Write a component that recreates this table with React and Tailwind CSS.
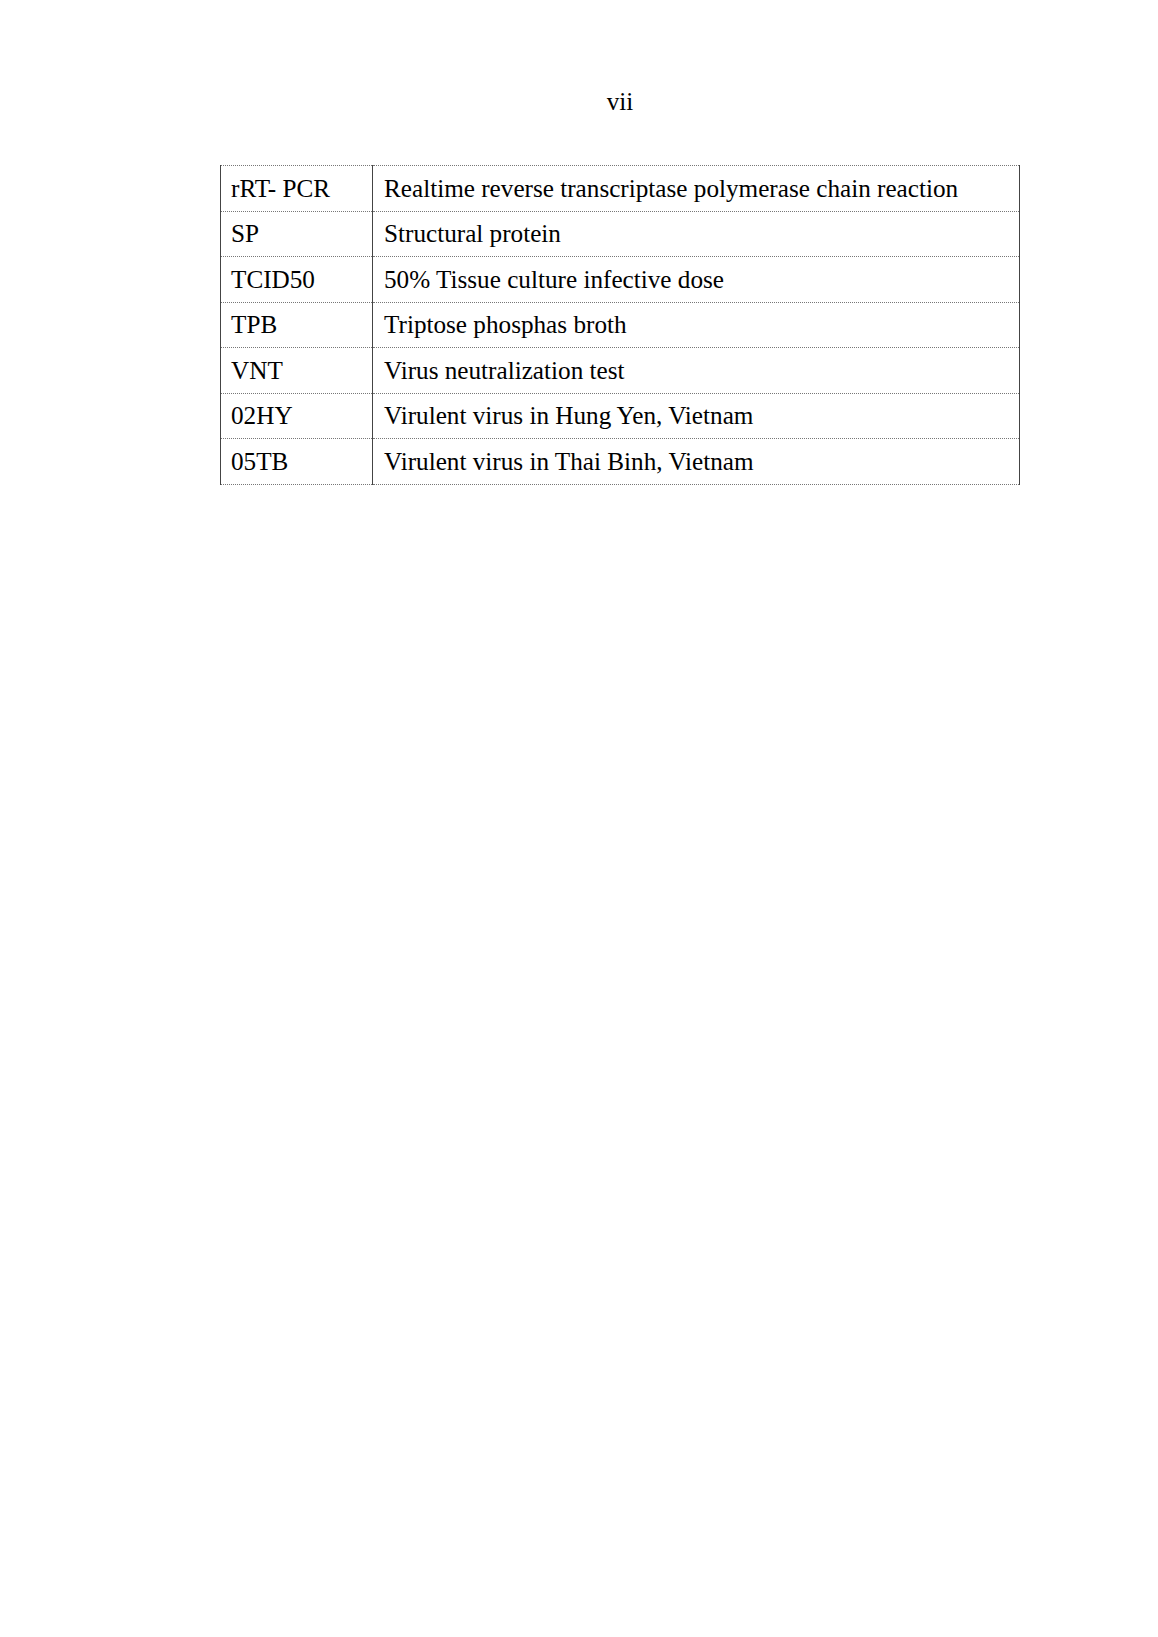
import React from 'react';

const rows = [
  ['rRT- PCR', 'Realtime reverse transcriptase polymerase chain reaction'],
  ['SP', 'Structural protein'],
  ['TCID50', '50% Tissue culture infective dose'],
  ['TPB', 'Triptose phosphas broth'],
  ['VNT', 'Virus neutralization test'],
  ['02HY', 'Virulent virus in Hung Yen, Vietnam'],
  ['05TB', 'Virulent virus in Thai Binh, Vietnam'],
];

export default function App() {
  return (
    <div className="min-h-[1637px] w-[1158px] bg-white text-black font-['Liberation_Serif',serif] text-[25.2px]">
      <div className="pl-[220px] pt-[88px]">
        <div className="w-[800px] text-center leading-[28px]">vii</div>
        <table className="mt-[49px] w-[800px] border-collapse">
          <tbody>
            {rows.map(([abbr, desc]) => (
              <tr key={abbr} className="h-[45.5px]">
                <td className="w-[152px] border-y border-l border-r border-y-[#777] border-l-[#444] border-r-[#444] border-dotted px-[10px] align-middle leading-none [border-left-style:solid] [border-right-style:solid]">
                  {abbr}
                </td>
                <td className="border-y border-r border-y-[#777] border-r-[#444] border-dotted px-[11px] align-middle leading-none [border-right-style:solid]">
                  {desc}
                </td>
              </tr>
            ))}
          </tbody>
        </table>
      </div>
    </div>
  );
}
